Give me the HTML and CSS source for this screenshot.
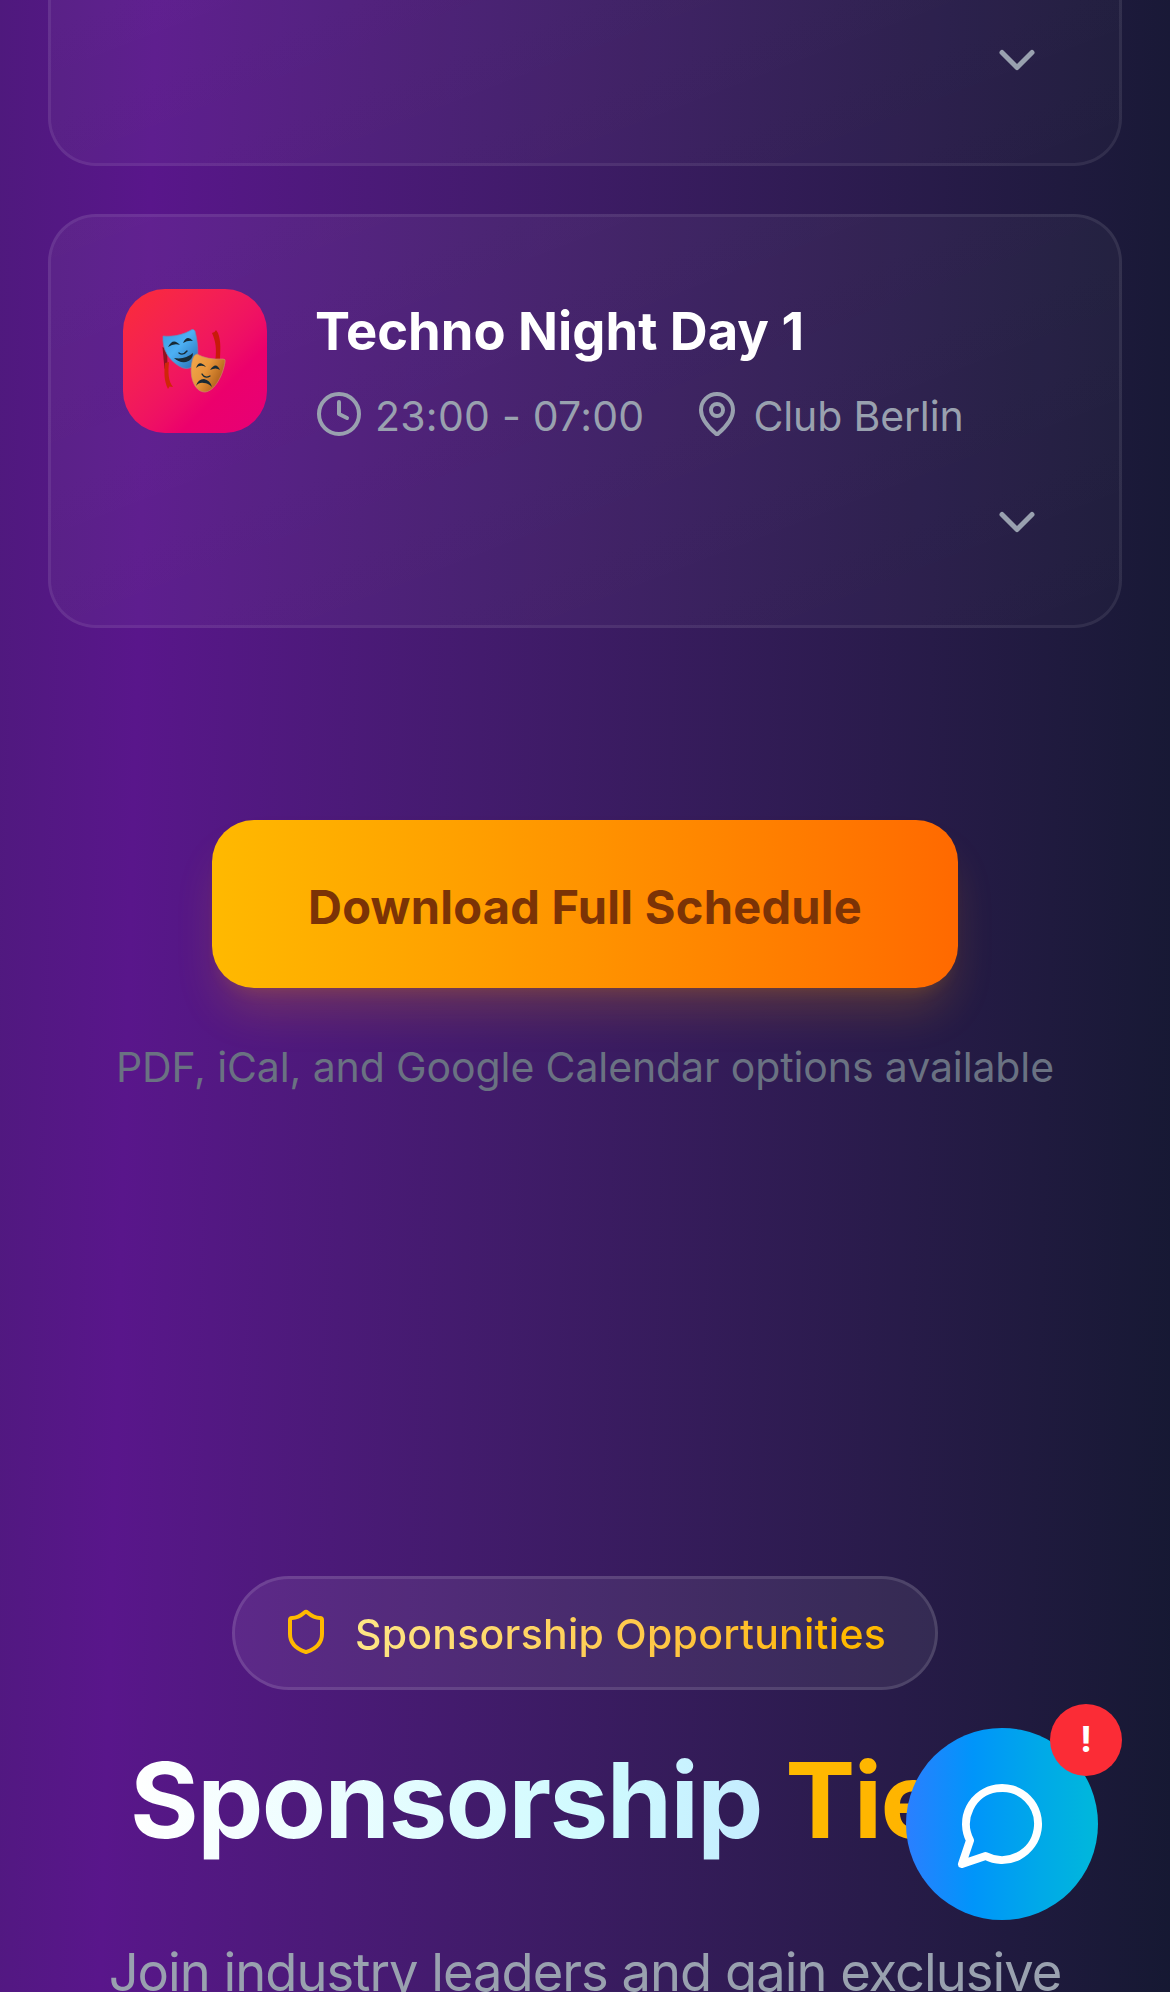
FILE: index.html
```html
<!DOCTYPE html>
<html lang="en">
<head>
<meta charset="utf-8">
<title>Festival Schedule</title>
<link rel="stylesheet" href="styles.css">
</head>
<body>
<main class="page">
  <section class="schedule">
    <article class="card card-partial">
      <svg class="icon chevron" viewBox="0 0 24 24"><path d="m6 9 6 6 6-6"/></svg>
    </article>
    <article class="card">
      <div class="event">
        <div class="event-icon">
          <svg class="masks" viewBox="0 0 64 64">
            <defs>
              <linearGradient id="blue" x1="0" y1="0" x2="1" y2="1"><stop offset="0" stop-color="#3b9be0"/><stop offset=".45" stop-color="#4db0f4"/><stop offset="1" stop-color="#256bb0"/></linearGradient>
              <linearGradient id="gold" x1="0" y1="0" x2="1" y2=".6"><stop offset="0" stop-color="#f2a94e"/><stop offset=".5" stop-color="#e8963a"/><stop offset="1" stop-color="#a85b16"/></linearGradient>
            </defs>
            <path fill="#8e1220" d="M.5 18 5 20 5.500 36 2.500 40Z"/>
            <path fill="#cf2608" d="M3 34 7 33C6 43 6 52 11 58L7.500 57.500 6 60C2 52 2 43 3 34Z"/>
            <path fill="#c81a0a" d="M50 4 52.500 3 54 1 56 4C59 12 58.500 20 58 30L53.500 30C54.500 20 54 13 50 4Z"/>
            <path fill="url(#blue)" stroke="#6a86b8" stroke-width=".7" d="M1 7C11 8 21 6 30 .5Q32 0 33 2C37 18 37 31 31 37Q25 42 17 37C7 31 0 21 1 7Z"/>
            <path fill="url(#gold)" stroke="#c98a68" stroke-width=".7" d="M35 25Q45 31 61 30Q64 30 63 33C61 46 53 62 43 63C32 63 27 47 30 33Q31 26 35 25Z"/>
            <g fill="#172a35">
              <path d="M6 18Q11 8 18 16Q12 14 6 18ZM21 14Q25 5 31 12Q26 11 21 14Z"/>
              <path d="M12 29Q23 31 31 24Q31 31 24 33Q17 34 12 29Z"/>
              <path d="M34 39Q37 30 44 38Q38 35 34 39ZM48 41Q54 32 58 41Q54 38 48 41Z"/>
              <path d="M34 57Q36 50 42 50Q48 51 50 58Q46 54 42 54Q37 53 34 57Z"/>
            </g>
            <path fill="none" stroke="#172a35" stroke-width="1.400" stroke-linecap="round" d="M17 24Q21 27 25 22M40 45Q43 50 48 47"/>
          </svg>
        </div>
        <div class="event-text">
          <h3 class="event-title">Techno Night Day 1</h3>
          <div class="event-meta">
            <span class="meta"><svg class="icon" viewBox="0 0 24 24"><circle cx="12" cy="12" r="10"/><path d="M12 6v6l4 2"/></svg><span class="meta-label time">23:00 - 07:00</span></span>
            <span class="meta"><svg class="icon" viewBox="0 0 24 24"><path d="M20 10c0 4.993-5.539 10.193-7.399 11.799a1 1 0 0 1-1.202 0C9.539 20.193 4 14.993 4 10a8 8 0 0 1 16 0"/><circle cx="12" cy="10" r="3"/></svg><span class="meta-label place">Club Berlin</span></span>
          </div>
        </div>
      </div>
      <svg class="icon chevron" viewBox="0 0 24 24"><path d="m6 9 6 6 6-6"/></svg>
    </article>
  </section>

  <section class="download">
    <button class="download-button"><span>Download Full Schedule</span></button>
    <p class="download-note">PDF, iCal, and Google Calendar options available</p>
  </section>

  <section class="sponsors">
    <div class="pill">
      <svg class="icon" viewBox="0 0 24 24"><path d="M20 13c0 5-3.500 7.500-7.660 8.950a1 1 0 0 1-.67-.01C7.500 20.500 4 18 4 13V6a1 1 0 0 1 1-1c2 0 4.500-1.200 6.240-2.720a1.170 1.170 0 0 1 1.520 0C14.510 3.810 17 5 19 5a1 1 0 0 1 1 1z"/></svg>
      <span class="pill-text">Sponsorship Opportunities</span>
    </div>
    <h2 class="heading"><span class="heading-light">Sponsorship</span> <span class="heading-gold">Tiers</span></h2>
    <p class="lead">Join industry leaders and gain exclusive</p>
  </section>
</main>

<button class="chat" aria-label="Open chat">
  <svg class="icon" viewBox="0 0 24 24"><path d="M7.900 20A9 9 0 1 0 4 16.100L2 22Z"/></svg>
  <span class="chat-badge">!</span>
</button>
</body>
</html>
```
FILE: styles.css
```css
* { box-sizing: border-box; margin: 0; padding: 0; }

body {
  font-family: Inter, "Liberation Sans", sans-serif;
  color: #fff;
  background: #0f172b;
}

button { border: 0; font: inherit; }

.page {
  width: 1170px;
  height: 1992px;
  overflow: hidden;
  background: linear-gradient(91.6deg in oklab, #0f172b -1014px, #59168b 156px, #0f172b 1326px);
}

.icon {
  flex: none;
  width: 48px;
  height: 48px;
  fill: none;
  stroke: currentColor;
  stroke-width: 2;
  stroke-linecap: round;
  stroke-linejoin: round;
}

.schedule {
  display: flex;
  flex-direction: column;
  gap: 48px;
  padding: 0 48px;
}

.card {
  display: flex;
  flex-direction: column;
  justify-content: space-between;
  height: 414px;
  padding: 72px 72px 73px;
  border: 3px solid rgba(255, 255, 255, .075);
  border-radius: 48px;
  background: linear-gradient(to bottom right, rgba(255, 255, 255, .055), rgba(255, 255, 255, .02)) border-box;
}

.card-partial {
  margin-top: -248px;
  justify-content: flex-end;
}

.chevron {
  width: 60px;
  height: 60px;
  align-self: flex-end;
  color: #99a1af;
}

.event { display: flex; gap: 48px; }

.event-icon {
  flex: none;
  display: flex;
  align-items: center;
  justify-content: center;
  width: 144px;
  height: 144px;
  border-radius: 42px;
  background: linear-gradient(to bottom right in oklab, #fb2c36, #ec006c 70%, #e60076);
}

.masks { width: 64px; height: 64px; margin: -1px 0 0 -3px; }

.event-title {
  font-size: 52.500px;
  line-height: 84px;
  font-weight: 700;
  letter-spacing: 0;
  white-space: nowrap;
}

.event-meta {
  display: flex;
  gap: 49px;
  margin-top: 11px;
  color: #99a1af;
}

.meta {
  display: flex;
  align-items: center;
  gap: 12px;
  height: 60px;
  font-size: 41px;
  line-height: 60px;
  white-space: nowrap;
}

.meta-label { padding-top: 3px; }
.time { letter-spacing: .25px; }
.place { letter-spacing: -.15px; }

.download {
  display: flex;
  flex-direction: column;
  align-items: center;
  margin-top: 192px;
}

.download-button {
  width: 746px;
  height: 168px;
  padding-top: 4px;
  border-radius: 42px;
  color: #7b3306;
  font-size: 47px;
  font-weight: 700;
  letter-spacing: .25px;
  background: linear-gradient(to right in oklab, #ffb900, #ff6900);
  box-shadow: 0 30px 45px -9px rgba(254, 154, 0, .2), 0 12px 18px -12px rgba(254, 154, 0, .2);
}

.download-note {
  margin-top: 49px;
  font-size: 41px;
  line-height: 60px;
  letter-spacing: -.11px;
  color: #6a7282;
  white-space: nowrap;
}

.sponsors {
  display: flex;
  flex-direction: column;
  align-items: center;
  margin-top: 479px;
}

.pill {
  display: flex;
  align-items: center;
  gap: 25px;
  width: 706px;
  height: 114px;
  padding: 0 0 2px 47px;
  border: 3px solid rgba(255, 255, 255, .12);
  border-radius: 57px;
  background: rgba(255, 255, 255, .07);
  color: #ffb900;
}

.pill-text {
  padding-top: 3px;
  font-size: 41px;
  line-height: 60px;
  font-weight: 500;
  letter-spacing: .25px;
  white-space: nowrap;
  color: transparent;
  background: linear-gradient(to right in oklab, #fee685, #ffb900 85%);
  background-clip: text;
}

.heading {
  margin-top: 50px;
  font-size: 105px;
  line-height: 120px;
  font-weight: 700;
  letter-spacing: -1.6px;
  white-space: nowrap;
}

.heading span {
  display: inline-block;
  line-height: 136px;
  margin: -8px 0;
  color: transparent;
  background-clip: text;
}

.heading .heading-light { background-image: linear-gradient(to right in oklab, #fff, #cefafe 75%, #c4ecff); }
.heading .heading-gold { background-image: linear-gradient(to right, #ffba00, #ffae00); }

.lead {
  margin-top: 72px;
  font-size: 52.500px;
  line-height: 80px;
  letter-spacing: -1px;
  color: #99a1af;
  white-space: nowrap;
}

/* Floating chat launcher */
.chat {
  position: absolute;
  left: 906px;
  top: 1728px;
  display: flex;
  align-items: center;
  justify-content: center;
  width: 192px;
  height: 192px;
  border-radius: 50%;
  color: #fff;
  background: linear-gradient(to right, #2b7fff, #0095fa 35%, #00a9e8 70%, #00b8db);
}

.chat .icon { width: 96px; height: 96px; }

.chat-badge {
  position: absolute;
  top: -24px;
  right: -24px;
  width: 72px;
  height: 72px;
  border-radius: 50%;
  background: #fb2c36;
  font-size: 36px;
  line-height: 70px;
  font-weight: 700;
  text-align: center;
}
```
